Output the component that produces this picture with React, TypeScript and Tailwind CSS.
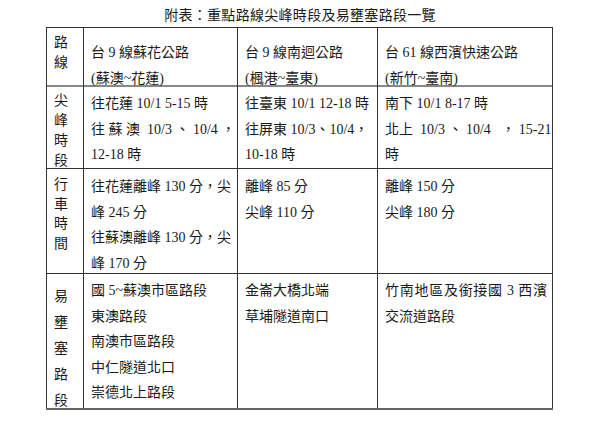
import React from "react";

const font = { fontFamily: '"Liberation Serif", "Noto Sans CJK TC", serif' };

function Label({ chars, pt, lh }: { chars: string[]; pt: string; lh: string }) {
  return (
    <div className={`border-r border-[#333] pl-[7px] ${pt} ${lh}`}>
      {chars.map((c, i) => (
        <div key={i}>{c}</div>
      ))}
    </div>
  );
}

function Cell({ children, last, pt }: { children: React.ReactNode; last?: boolean; pt: string }) {
  return (
    <div className={`${last ? "" : "border-r border-[#333]"} pl-[7px] pr-[6px] ${pt} leading-[25.5px]`}>
      {children}
    </div>
  );
}

const J = ({ children }: { children: React.ReactNode }) => (
  <div className="text-justify [text-align-last:justify] whitespace-pre">{children}</div>
);

export default function App() {
  return (
    <div className="w-[600px] h-[427px] bg-white text-[#1a1a1a] text-[14px]" style={font}>
      <div className="pt-[6px] h-[27px] text-center tracking-[0.3px] leading-[20px]">
        附表：重點路線尖峰時段及易壅塞路段一覽
      </div>
      <div className="ml-[46px] w-[507px] border-x border-t border-[#333]">
        <div className="grid grid-cols-[37px_154px_140px_175px] h-[59px] border-b-2 border-[#888]">
          <Label chars={["路", "線"]} pt="pt-[5px]" lh="leading-[20px]" />
          <Cell pt="pt-[12px]">
            <div>台 9 線蘇花公路</div>
            <div>(蘇澳~花蓮)</div>
          </Cell>
          <Cell pt="pt-[12px]">
            <div>台 9 線南迴公路</div>
            <div>(楓港~臺東)</div>
          </Cell>
          <Cell last pt="pt-[12px]">
            <div>台 61 線西濱快速公路</div>
            <div>(新竹~臺南)</div>
          </Cell>
        </div>
        <div className="grid grid-cols-[37px_154px_140px_175px] h-[82px] border-b border-[#333]">
          <Label chars={["尖", "峰", "時", "段"]} pt="pt-[4px]" lh="leading-[20px]" />
          <Cell pt="pt-[4px]">
            <div>往花蓮 10/1 5-15 時</div>
            <J>往 蘇 澳  10/3 、 10/4 ，</J>
            <div>12-18 時</div>
          </Cell>
          <Cell pt="pt-[4px]">
            <div>往臺東 10/1 12-18 時</div>
            <div>往屏東 10/3、10/4，</div>
            <div>10-18 時</div>
          </Cell>
          <Cell last pt="pt-[4px]">
            <div>南下 10/1 8-17 時</div>
            <J>北上  10/3 、 10/4   ， 15-21</J>
            <div>時</div>
          </Cell>
        </div>
        <div className="grid grid-cols-[37px_154px_140px_175px] h-[105px] border-b border-[#333]">
          <Label chars={["行", "車", "時", "間"]} pt="pt-[6px]" lh="leading-[19.5px]" />
          <Cell pt="pt-[5px]">
            <J>往花蓮離峰 130 分，尖</J>
            <div>峰 245 分</div>
            <J>往蘇澳離峰 130 分，尖</J>
            <div>峰 170 分</div>
          </Cell>
          <Cell pt="pt-[5px]">
            <div>離峰 85 分</div>
            <div>尖峰 110 分</div>
          </Cell>
          <Cell last pt="pt-[5px]">
            <div>離峰 150 分</div>
            <div>尖峰 180 分</div>
          </Cell>
        </div>
        <div className="grid grid-cols-[37px_154px_140px_175px] h-[134px] overflow-hidden">
          <Label chars={["易", "壅", "塞", "路", "段"]} pt="pt-[10px]" lh="leading-[26px]" />
          <Cell pt="pt-[4px]">
            <div>國 5~蘇澳市區路段</div>
            <div>東澳路段</div>
            <div>南澳市區路段</div>
            <div>中仁隧道北口</div>
            <div>崇德北上路段</div>
          </Cell>
          <Cell pt="pt-[4px]">
            <div>金崙大橋北端</div>
            <div>草埔隧道南口</div>
          </Cell>
          <Cell last pt="pt-[4px]">
            <J>竹南地區及銜接國 3 西濱</J>
            <div>交流道路段</div>
          </Cell>
        </div>
        <div className="h-[2px] -mx-px bg-[#666]" />
      </div>
    </div>
  );
}
